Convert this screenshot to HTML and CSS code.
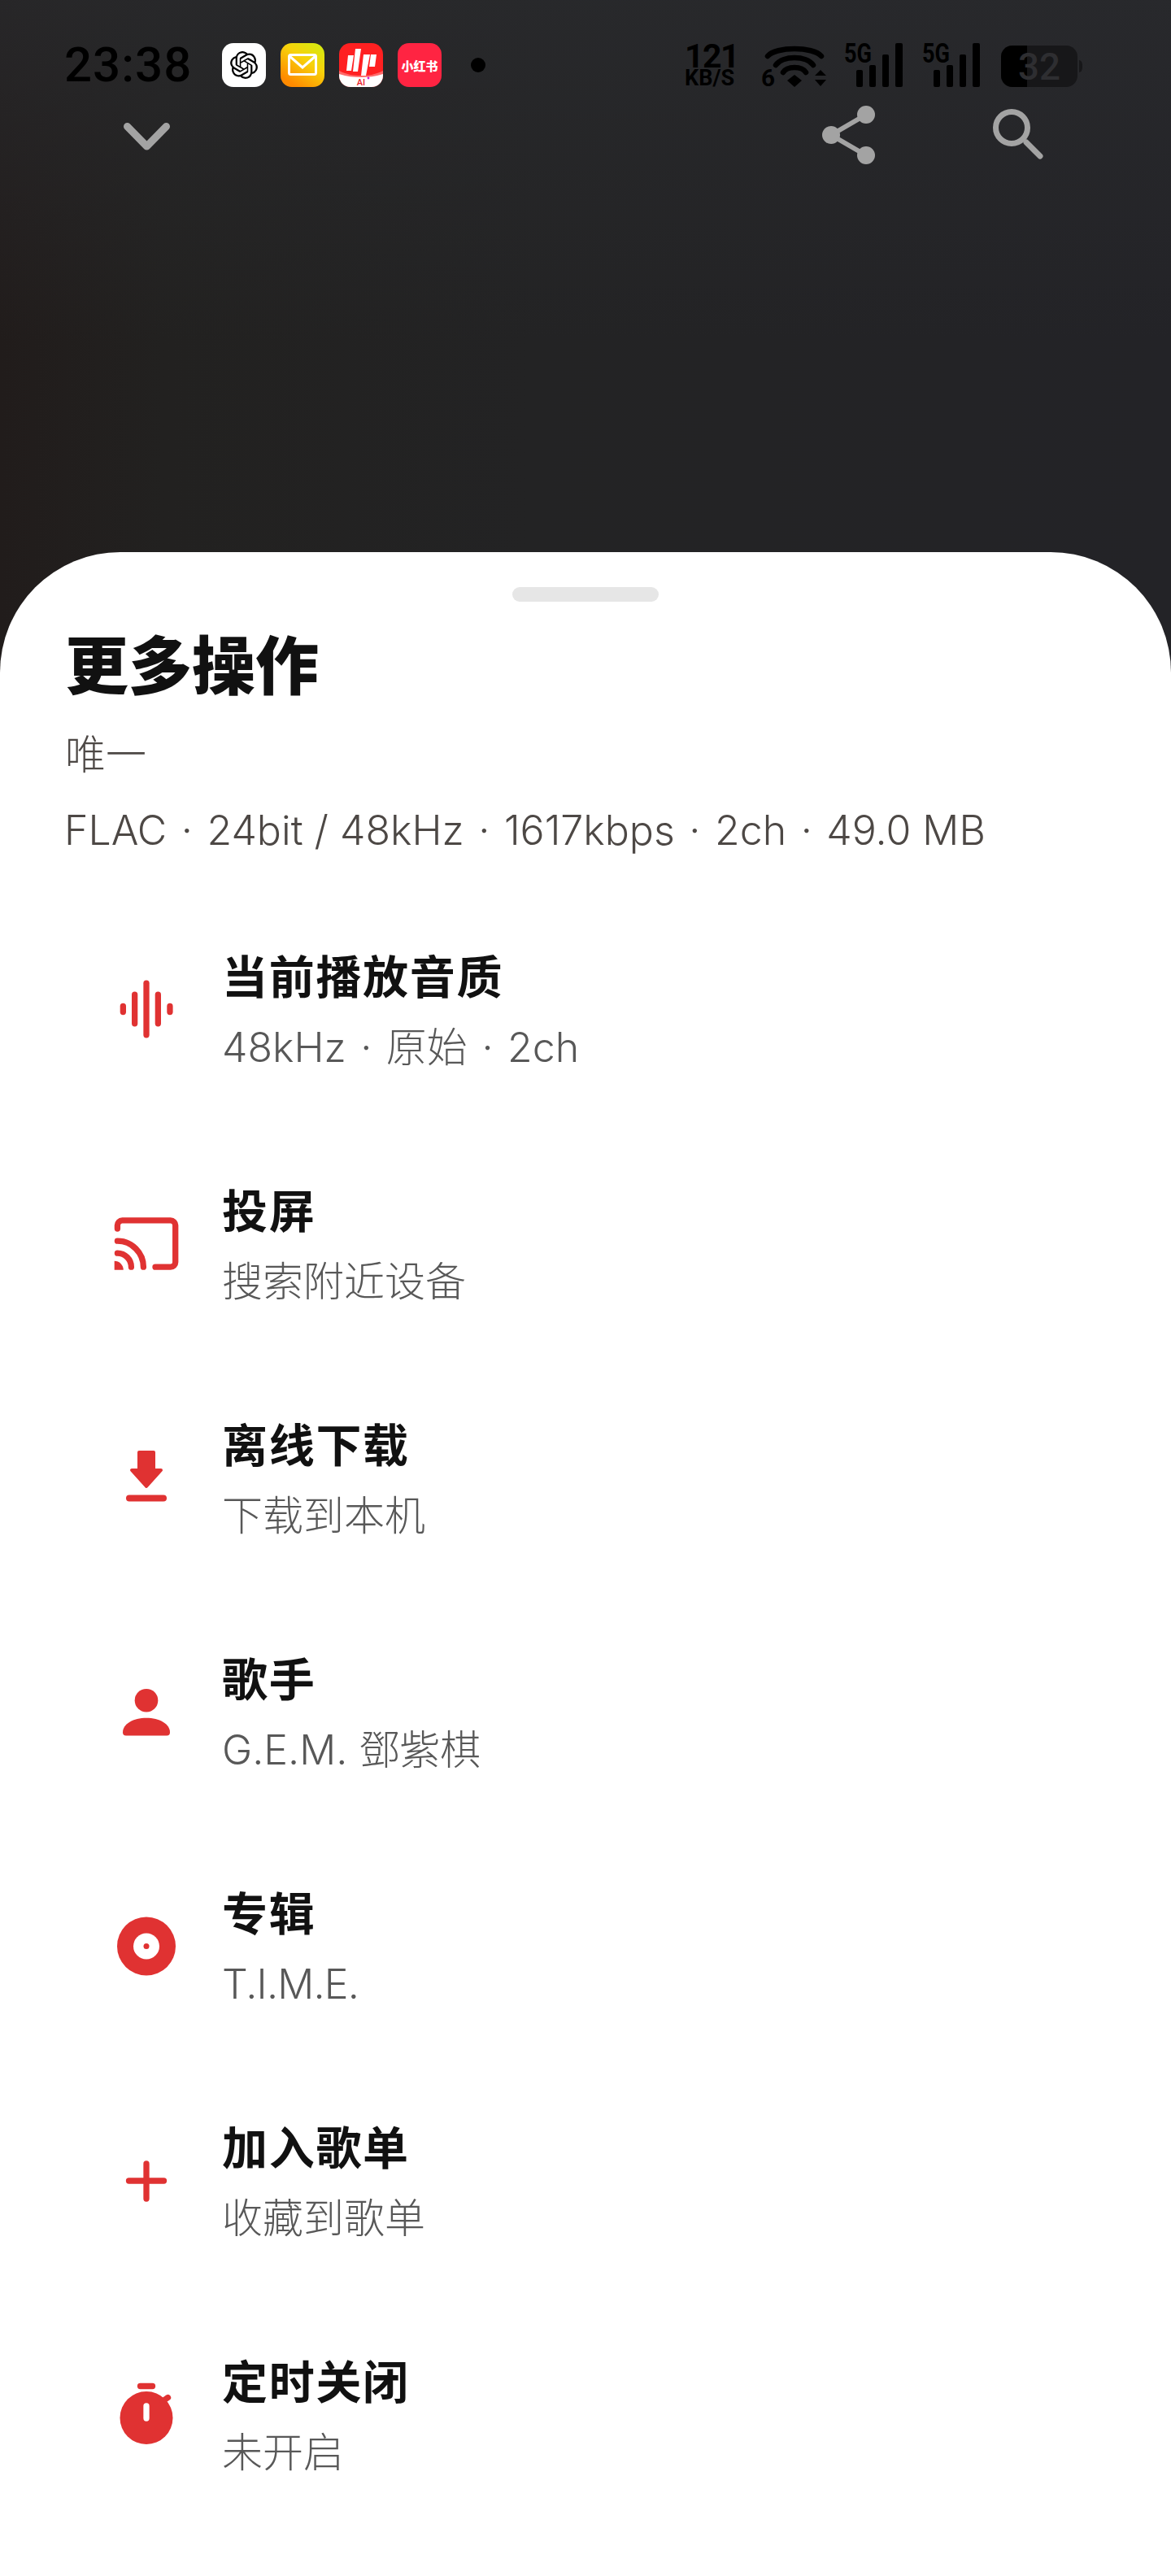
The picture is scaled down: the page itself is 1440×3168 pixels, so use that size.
FILE: index.html
```html
<!DOCTYPE html>
<html lang="en">
<head>
  <meta charset="UTF-8">
  <meta name="viewport" content="width=device-width, initial-scale=1.0">
  <title>更多操作</title>
  <link rel="stylesheet" href="styles.css">
</head>
<body>
  <div class="screen">
    <div class="status-bar">
      <div class="status-left">
        <div class="time">23:38</div>
        <div class="app-icons">
          <div class="app app-chat">
            <svg viewBox="0 0 24 24" width="34" height="34"><path fill="#000" d="M22.2819 9.8211a5.9847 5.9847 0 0 0-.5157-4.9108 6.0462 6.0462 0 0 0-6.5098-2.9A6.0651 6.0651 0 0 0 4.9807 4.1818a5.9847 5.9847 0 0 0-3.9977 2.9 6.0462 6.0462 0 0 0 .7427 7.0966 5.98 5.98 0 0 0 .511 4.9107 6.051 6.051 0 0 0 6.5146 2.9001A5.9847 5.9847 0 0 0 13.2599 24a6.0557 6.0557 0 0 0 5.7718-4.2058 5.9894 5.9894 0 0 0 3.9977-2.9001 6.0557 6.0557 0 0 0-.7475-7.0729zm-9.022 12.6081a4.4755 4.4755 0 0 1-2.8764-1.0408l.1419-.0804 4.7783-2.7582a.7948.7948 0 0 0 .3927-.6813v-6.7369l2.02 1.1686a.071.071 0 0 1 .038.052v5.5826a4.504 4.504 0 0 1-4.4945 4.4944zm-9.6607-4.1254a4.4708 4.4708 0 0 1-.5346-3.0137l.142.0852 4.783 2.7582a.7712.7712 0 0 0 .7806 0l5.8428-3.3685v2.3324a.0804.0804 0 0 1-.0332.0615L9.74 19.9502a4.4992 4.4992 0 0 1-6.1408-1.6464zM2.3408 7.8956a4.485 4.485 0 0 1 2.3655-1.9728V11.6a.7664.7664 0 0 0 .3879.6765l5.8144 3.3543-2.0201 1.1685a.0757.0757 0 0 1-.071 0l-4.8303-2.7865A4.504 4.504 0 0 1 2.3408 7.872zm16.5963 3.8558L13.1038 8.364 15.1192 7.2a.0757.0757 0 0 1 .071 0l4.8303 2.7913a4.4944 4.4944 0 0 1-.6765 8.1042v-5.6772a.79.79 0 0 0-.407-.667zm2.0107-3.0231l-.142-.0852-4.7735-2.7818a.7759.7759 0 0 0-.7854 0L9.409 9.2297V6.8974a.0662.0662 0 0 1 .0284-.0615l4.8303-2.7866a4.4992 4.4992 0 0 1 6.6802 4.66zM8.3065 12.863l-2.02-1.1638a.0804.0804 0 0 1-.038-.0567V6.0742a4.4992 4.4992 0 0 1 7.3757-3.4537l-.142.0805L8.704 5.459a.7948.7948 0 0 0-.3927.6813zm1.0976-2.3654l2.602-1.4998 2.6069 1.4998v2.9994l-2.5974 1.4997-2.6067-1.4997Z"/></svg>
          </div>
          <div class="app app-mail">
            <svg viewBox="0 0 54 54" width="54" height="54"><rect x="10.5" y="14.5" width="33" height="24" rx="2" fill="none" stroke="#fff" stroke-width="3"/><path d="M11 16l16 14 16-14" fill="none" stroke="#fff" stroke-width="3"/></svg>
          </div>
          <div class="app app-music">
            <svg viewBox="0 0 54 54" width="54" height="54">
              <path d="M0 34c10 5 18 6 27 6s17-1 27-6v5c-10 4-18 5-27 5s-17-1-27-5z" fill="#ff6a6a"/>
              <path d="M0 38c10 3 18 4 27 4s17-1 27-4v16H0z" fill="#fff"/>
              <path d="M11 15h7l-3 19H9zM20 7h7l-4 28h-6zM30 14h8l-5 26h-6zM39 14h7l-2 15h-7z" fill="#fff"/>
              <text class="music-ai" x="27" y="52" text-anchor="middle">AI</text>
              <circle cx="36" cy="43" r="1.4" fill="#d81fd0"/>
            </svg>
          </div>
          <div class="app app-red">小红书</div>
        </div>
        <div class="dot"></div>
      </div>
      <div class="status-right">
        <div class="speed">
          <div class="speed-num">121</div>
          <div class="speed-unit">KB/S</div>
        </div>
        <svg class="wifi" viewBox="0 0 82 54" width="82" height="54">
          <path d="M8 16C18 4 64 4 74 16" class="arc"/>
          <path d="M18 27C26 15 56 15 64 27" class="arc"/>
          <path d="M27 36C32 28 50 28 55 36" class="arc"/>
          <path d="M41 39l9 7-9 8-9-8z"/>
          <path d="M73 33l7 7H66zM66 45h14l-7 8z"/>
          <text class="st-text" x="0" y="53" textLength="17" lengthAdjust="spacingAndGlyphs">6</text>
        </svg>
        <svg class="signal" viewBox="0 0 75 54" width="75" height="54">
          <text class="st-small" x="0" y="24" textLength="34" lengthAdjust="spacingAndGlyphs">5G</text>
          <rect x="15" y="33" width="8" height="21" rx="2"/>
          <rect x="31" y="27" width="8" height="27" rx="2"/>
          <rect x="47" y="14" width="8" height="40" rx="2"/>
          <rect x="63" y="0" width="9" height="54" rx="2"/>
        </svg>
        <svg class="signal" viewBox="0 0 75 54" width="75" height="54">
          <text class="st-small" x="1" y="24" textLength="34" lengthAdjust="spacingAndGlyphs">5G</text>
          <rect x="15" y="33" width="8" height="21" rx="2"/>
          <rect x="31" y="27" width="8" height="27" rx="2"/>
          <rect x="47" y="14" width="8" height="40" rx="2"/>
          <rect x="63" y="0" width="9" height="54" rx="2"/>
        </svg>
        <svg class="battery" viewBox="0 0 103 54" width="103" height="54">
          <rect x="3" y="3" width="94" height="51" rx="14" fill="#171719"/>
          <path d="M17 3h18v51H17a14 14 0 0 1-14-14V17A14 14 0 0 1 17 3z" fill="#000"/>
          <path d="M99 21a4 6 0 0 1 4 6v3a4 6 0 0 1-4 6z" fill="#171719"/>
          <text class="batt-text" x="24" y="45" textLength="52" lengthAdjust="spacingAndGlyphs">32</text>
        </svg>
      </div>
    </div>

    <div class="toolbar">
      <svg class="tool" viewBox="0 0 96 96" width="96" height="96"><path d="M24.5 37.500L48.500 62 72.500 37.500" class="tool-line"/></svg>
      <div class="tool-group">
        <svg class="tool" viewBox="0 0 96 96" width="96" height="96">
          <path d="M69 23L26 48 69 73" class="tool-line thin"/>
          <circle cx="26" cy="48" r="11"/>
          <circle cx="69" cy="23" r="11"/>
          <circle cx="69" cy="73" r="11"/>
        </svg>
        <svg class="tool" viewBox="0 0 96 96" width="96" height="96">
          <circle cx="42" cy="39" r="19.500" class="tool-line thin-7"/>
          <path d="M60 57L77 74" class="tool-line thin-7"/>
        </svg>
      </div>
    </div>

    <div class="sheet">
      <div class="handle"></div>
      <div class="sheet-head">
        <h1>更多操作</h1>
        <p class="song">唯一</p>
        <p class="meta">FLAC <span class="sep">·</span> 24bit / 48kHz <span class="sep">·</span> 1617kbps <span class="sep">·</span> 2ch <span class="sep">·</span> 49.0 MB</p>
      </div>

      <div class="list">
        <div class="row">
          <svg class="row-icon" viewBox="0 0 96 96" width="96" height="96">
            <rect x="15.700" y="40.800" width="7.300" height="14.400" rx="3.650"/>
            <rect x="30" y="26.500" width="7.300" height="43" rx="3.650"/>
            <rect x="44.350" y="12.500" width="7.300" height="71" rx="3.650"/>
            <rect x="58.700" y="26.500" width="7.300" height="43" rx="3.650"/>
            <rect x="73.300" y="40.800" width="7.300" height="14.400" rx="3.650"/>
          </svg>
          <div class="row-text">
            <div class="row-title">当前播放音质</div>
            <div class="row-sub">48kHz <span class="sep">·</span> 原始 <span class="sep">·</span> 2ch</div>
          </div>
        </div>

        <div class="row">
          <svg class="row-icon" viewBox="0 0 96 96" width="96" height="96">
            <path class="line" d="M12.400 30V26A6 6 0 0 1 18.400 19.900H77.700A6 6 0 0 1 83.700 26V71.200A6 6 0 0 1 77.700 77.200H59"/>
            <path class="line" d="M12.400 45.200A32 32 0 0 1 44.400 77.200"/>
            <path class="line" d="M12.400 60.200A17 17 0 0 1 29.400 77.200"/>
            <path d="M8.700 69.800A11 11 0 0 1 19.700 80.800H8.700z"/>
          </svg>
          <div class="row-text">
            <div class="row-title">投屏</div>
            <div class="row-sub">搜索附近设备</div>
          </div>
        </div>

        <div class="row">
          <svg class="row-icon" viewBox="0 0 96 96" width="96" height="96">
            <path class="joined" d="M39 17H57V39H66L48 59 30 39H39z"/>
            <rect x="23" y="69.500" width="50" height="8" rx="4"/>
          </svg>
          <div class="row-text">
            <div class="row-title">离线下载</div>
            <div class="row-sub">下载到本机</div>
          </div>
        </div>

        <div class="row">
          <svg class="row-icon" viewBox="0 0 96 96" width="96" height="96">
            <circle cx="48" cy="34.200" r="14.300"/>
            <path d="M23 77.500H73A4 4 0 0 0 77 73.500C77 63 64 55.800 48 55.800S19 63 19 73.500A4 4 0 0 0 23 77.500z"/>
          </svg>
          <div class="row-text">
            <div class="row-title">歌手</div>
            <div class="row-sub">G.E.M. 鄧紫棋</div>
          </div>
        </div>

        <div class="row">
          <svg class="row-icon" viewBox="0 0 96 96" width="96" height="96">
            <circle cx="48" cy="48.500" r="36"/>
            <circle cx="48" cy="48.500" r="16" fill="#fff"/>
            <circle cx="48" cy="48.500" r="3.500"/>
          </svg>
          <div class="row-text">
            <div class="row-title">专辑</div>
            <div class="row-sub tight">T.I.M.E.</div>
          </div>
        </div>

        <div class="row">
          <svg class="row-icon" viewBox="0 0 96 96" width="96" height="96">
            <path class="line" d="M26.500 49H69.500M48 28V71"/>
          </svg>
          <div class="row-text">
            <div class="row-title">加入歌单</div>
            <div class="row-sub">收藏到歌单</div>
          </div>
        </div>

        <div class="row">
          <svg class="row-icon" viewBox="0 0 96 96" width="96" height="96">
            <circle cx="48" cy="52.500" r="32.500"/>
            <path class="line" d="M40.500 13.500H55.500"/>
            <path class="line" d="M68 32L74.500 27.500"/>
            <path class="line white" d="M48 38V53"/>
          </svg>
          <div class="row-text">
            <div class="row-title">定时关闭</div>
            <div class="row-sub">未开启</div>
          </div>
        </div>
      </div>
    </div>
  </div>
</body>
</html>
```

FILE: styles.css
```css
* {
  box-sizing: border-box;
}
body {
  margin: 0;
  font-family: "Inter", "Noto Sans CJK SC", sans-serif;
}
.screen {
  width: 1440px;
  height: 3168px;
  overflow: hidden;
  background:
    linear-gradient(180deg, rgba(42, 43, 46, 0.7) 0, rgba(42, 43, 46, 0) 420px) 0 0 / 100% 850px no-repeat,
    linear-gradient(90deg, #211c1b 0, #222120 14%, #232324 45%, #232327 100%) 0 0 / 100% 850px no-repeat;
}

/* status bar */
.status-bar {
  display: flex;
  justify-content: space-between;
  padding: 53px 109px 0 79px;
  height: 107px;
}
.status-left {
  display: flex;
  align-items: center;
}
.time {
  width: 194px;
  font-family: "Roboto", sans-serif;
  font-size: 60px;
  font-weight: 500;
  letter-spacing: 1px;
  line-height: 54px;
  color: #000;
}
.app-icons {
  display: flex;
  gap: 18px;
}
.app {
  width: 54px;
  height: 54px;
  border-radius: 14px;
  overflow: hidden;
  display: flex;
  align-items: center;
  justify-content: center;
}
.app svg {
  display: block;
}
.app-chat {
  background: #fff;
}
.app-mail {
  background: linear-gradient(215deg, #cfee12 0%, #f7d20a 40%, #ff8a00 85%);
}
.app-music {
  background: #ff2021;
}
.music-ai {
  font-family: "Roboto", sans-serif;
  font-size: 11px;
  font-weight: 500;
  fill: #e8202a;
}
.app-red {
  background: #ff2442;
  color: #fff;
  font-family: "Noto Sans CJK SC", sans-serif;
  font-size: 15px;
  font-weight: 900;
  white-space: nowrap;
}
.dot {
  width: 18px;
  height: 18px;
  margin-left: 36px;
  border-radius: 50%;
  background: #000;
}
.status-right {
  display: flex;
  gap: 20px;
}
.status-right svg {
  display: block;
  overflow: visible;
}
.speed {
  width: 74px;
  color: #000;
  font-family: "Roboto", sans-serif;
  font-weight: 700;
}
.speed-num {
  font-size: 41px;
  line-height: 32px;
  letter-spacing: -1.5px;
}
.speed-unit {
  margin-top: 1px;
  font-size: 27px;
  line-height: 21px;
}
.arc {
  fill: none;
  stroke: #000;
  stroke-width: 6.500;
  stroke-linecap: round;
}
.st-text,
.st-small {
  font-family: "Roboto", sans-serif;
  font-weight: 700;
  fill: #000;
}
.st-text {
  font-size: 29px;
}
.st-small {
  font-size: 33px;
}
.batt-text {
  font-family: "Roboto", sans-serif;
  font-size: 46px;
  font-weight: 500;
  fill: #2e2e31;
}

/* player toolbar */
.toolbar {
  display: flex;
  justify-content: space-between;
  margin-top: 11px;
  padding: 0 142px 0 132px;
}
.tool-group {
  display: flex;
  gap: 110px;
}
.tool {
  display: block;
  fill: #a3a3a3;
}
.tool-line {
  fill: none;
  stroke: #a3a3a3;
  stroke-width: 9;
  stroke-linecap: round;
  stroke-linejoin: round;
}
.tool-line.thin {
  stroke-width: 6;
}
.tool-line.thin-7 {
  stroke-width: 7;
}

/* bottom sheet */
.sheet {
  margin-top: 465px;
  height: 2489px;
  padding-top: 43px;
  background: #fff;
  border-radius: 148px 148px 0 0;
}
.handle {
  width: 180px;
  height: 18px;
  margin: 0 auto;
  border-radius: 9px;
  background: #e6e6e6;
}
.sheet-head {
  margin-top: 24px;
  padding-left: 80px;
}
h1 {
  margin: 0;
  font-family: "Noto Sans CJK SC", sans-serif;
  font-size: 78px;
  font-weight: 900;
  line-height: 100px;
  color: #111;
}
.song,
.meta {
  margin: 0;
  font-size: 50px;
  font-weight: 300;
  line-height: 70px;
  color: #4d4845;
}
.song {
  margin-top: 29px;
}
.meta {
  margin-top: 23px;
  margin-left: -1px;
}
.sep {
  margin: 0 3.500px;
}
.list {
  margin-top: 41px;
}
.row {
  display: flex;
  align-items: center;
  gap: 45px;
  height: 288px;
  padding-left: 132px;
}
.row-icon {
  flex: none;
  fill: #e03232;
}
.line {
  fill: none;
  stroke: #e03232;
  stroke-width: 7.300;
  stroke-linecap: round;
}
.line.white {
  stroke: #fff;
}
.joined {
  stroke: #e03232;
  stroke-width: 4;
  stroke-linejoin: round;
}
.row-text {
  padding-top: 3px;
}
.row-title {
  margin-bottom: 4px;
  font-family: "Noto Sans CJK SC", sans-serif;
  font-size: 56px;
  font-weight: 700;
  letter-spacing: 1.700px;
  line-height: 86px;
  color: #111;
}
.row-sub {
  font-size: 50px;
  font-weight: 300;
  line-height: 86px;
  color: #585858;
}
.row-sub.tight {
  letter-spacing: -0.800px;
}
```
